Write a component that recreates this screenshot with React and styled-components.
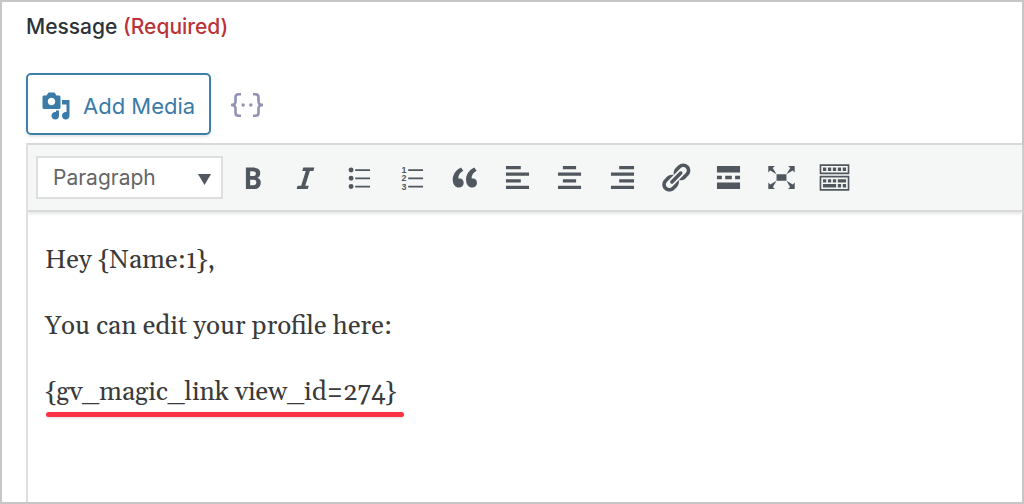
import { useState } from 'react'
import styled, { createGlobalStyle } from 'styled-components'

const GlobalStyle = createGlobalStyle`
    * {
        box-sizing: border-box;
    }
    body {
        margin: 0;
        background-color: #fff;
        font-family: Inter, "Liberation Sans", sans-serif;
    }
`
const StyledPage = styled.main`
    display: flex;
    flex-direction: column;
    min-height: 100vh;
    padding: 10px 0 0 24px;
    border: 2px solid #c6c6c6;
`
const StyledLabel = styled.label`
    font-size: 21px;
    line-height: 30px;
    font-weight: 500;
    color: #2c3338;
    margin-bottom: 31px;
`
const StyledRequired = styled.span`
    color: #b93338;
`
const StyledMediaBar = styled.div`
    display: flex;
    align-items: center;
    gap: 18px;
    margin-bottom: 8px;
`
const StyledMediaButton = styled.button`
    display: flex;
    align-items: center;
    gap: 12px;
    height: 62px;
    padding: 3px 14px 0 13px;
    font-family: inherit;
    font-size: 22px;
    color: #3a7ba8;
    background-color: #fff;
    border: 2px solid #3f80ab;
    border-radius: 5px;
    box-shadow: 0 2px 3px #e4e4e4;
    cursor: pointer;
`
const StyledTagButton = styled.button`
    display: flex;
    padding: 2px 0 0;
    color: #9292b6;
    background: none;
    border: none;
    cursor: pointer;
`
const StyledEditor = styled.div`
    display: flex;
    flex-direction: column;
    flex: 1;
    border-left: 2px solid #dedede;
`
const StyledToolbar = styled.div`
    display: flex;
    align-items: center;
    gap: 13px;
    padding: 11px 8px;
    background-color: #f5f7f7;
    border-top: 2px solid #d8d9d9;
    border-bottom: 2px solid #d8d9d9;
    box-shadow: 0 2px 3px #e6e6e6;
`
const StyledSelectWrapper = styled.div`
    position: relative;
    flex: none;
    width: 187px;
`
const StyledSelect = styled.select`
    display: block;
    appearance: none;
    width: 100%;
    height: 43px;
    padding: 0 15px;
    font-family: inherit;
    font-size: 21px;
    color: #646566;
    background-color: #fff;
    border: 2px solid #dddede;
    border-radius: 0;
`
const StyledArrow = styled.svg`
    position: absolute;
    top: 18px;
    right: 12px;
    pointer-events: none;
`
const StyledTools = styled.div`
    display: flex;
    justify-content: space-between;
    flex: 0 1 615px;
`
const StyledTool = styled.button`
    display: flex;
    padding: 0;
    color: #50575e;
    background: none;
    border: none;
    cursor: pointer;
    &:hover {
        color: #1d2327;
    }
`
const StyledContent = styled.div`
    position: relative;
    display: flex;
    flex: 1;
    margin-top: 2px;
`
const StyledTextarea = styled.textarea`
    flex: 1;
    min-height: 240px;
    padding: 30px 17px 0;
    font-family: Georgia, Gelasio, "Liberation Serif", serif;
    font-size: 26px;
    line-height: 33px;
    color: #3a3a3a;
    background: none;
    border: none;
    outline: none;
    resize: none;
`
const StyledUnderline = styled.span`
    position: absolute;
    top: 198px;
    left: 18px;
    width: 358px;
    height: 5px;
    border-radius: 3px;
    background-color: #fb3345;
    box-shadow: 0 1px 3px #ddd;
    pointer-events: none;
`

const tools = [
    { name: 'Bold', path: 'M6 4v13h4.54c1.37 0 2.46-.33 3.26-1 .8-.66 1.2-1.58 1.2-2.77 0-.84-.17-1.51-.51-2.01s-.9-.85-1.67-1.03v-.09c.57-.1 1.02-.4 1.36-.9s.51-1.13.51-1.91c0-1.14-.39-1.98-1.17-2.5C12.75 4.26 11.5 4 9.78 4H6zm2.57 5.15V6.26h1.36c.73 0 1.27.11 1.61.32.34.22.51.58.51 1.07 0 .54-.16.92-.47 1.15s-.82.35-1.51.35h-1.5zm0 2.19h1.6c1.44 0 2.16.53 2.16 1.61 0 .6-.17 1.05-.51 1.34s-.86.43-1.57.43H8.57v-3.38z' },
    { name: 'Italic', path: 'M14.78 6h-2.13l-2.8 9h2.12l-.62 2H4.6l.62-2h2.14l2.8-9H8.03l.62-2h6.75z' },
    { name: 'Bulleted list', path: 'M5.5 7a1.5 1.5 0 1 1 0-3 1.5 1.5 0 0 1 0 3zM8 5h9v1H8zM5.5 12a1.5 1.5 0 1 1 0-3 1.5 1.5 0 0 1 0 3zM8 10h9v1H8zM5.5 17a1.5 1.5 0 1 1 0-3 1.5 1.5 0 0 1 0 3zM8 15h9v1H8z' },
    { name: 'Numbered list', path: 'M8 5h9v1H8zM8 10h9v1H8zM8 15h9v1H8z', digits: true },
    { name: 'Blockquote', path: 'M9.49 13.22c0-.74-.2-1.38-.61-1.9-.62-.78-1.83-.88-2.53-.72-.29-1.65 1.11-3.75 2.92-4.65L7.88 4c-2.73 1.3-5.42 4.28-4.96 8.05C3.21 14.43 4.59 16 6.54 16c.85 0 1.56-.25 2.12-.75s.83-1.18.83-2.03zm8.05 0c0-.74-.2-1.38-.61-1.9-.63-.78-1.83-.88-2.53-.72-.29-1.65 1.11-3.75 2.92-4.65L15.93 4c-2.73 1.3-5.41 4.28-4.95 8.05.29 2.38 1.66 3.95 3.61 3.95.85 0 1.56-.25 2.12-.75s.83-1.18.83-2.03z' },
    { name: 'Align left', path: 'M12 5V3H3v2h9zm5 4V7H3v2h14zm-5 4v-2H3v2h9zm5 4v-2H3v2h14z' },
    { name: 'Align center', path: 'M14 5V3H6v2h8zm3 4V7H3v2h14zm-3 4v-2H6v2h8zm3 4v-2H3v2h14z' },
    { name: 'Align right', path: 'M17 5V3H8v2h9zm0 4V7H3v2h14zm0 4v-2H8v2h9zm0 4v-2H3v2h14z' },
    { name: 'Insert link', path: 'M17.74 2.76c1.68 1.69 1.68 4.41 0 6.1l-1.53 1.52c-1.12 1.12-2.7 1.47-4.14 1.09l2.62-2.61.76-.77.76-.76c.84-.84.84-2.2 0-3.04-.84-.85-2.2-.85-3.04 0l-.77.76-3.38 3.38c-.37-1.44-.02-3.02 1.1-4.14l1.52-1.53c1.69-1.68 4.42-1.68 6.1 0zM8.59 13.43l5.34-5.34c.42-.42.42-1.1 0-1.52-.44-.43-1.13-.39-1.53 0l-5.33 5.34c-.42.42-.42 1.1 0 1.52.44.43 1.13.39 1.52 0zm-.76 2.29l4.14-4.15c.38 1.44.03 3.02-1.09 4.14l-1.52 1.53c-1.69 1.68-4.41 1.68-6.1 0-1.68-1.68-1.68-4.42 0-6.1l1.53-1.52c1.12-1.12 2.7-1.47 4.14-1.1l-4.14 4.15c-.85.84-.85 2.2 0 3.05.84.84 2.2.84 3.04 0z' },
    { name: 'Read more', path: 'M17 7V3H3v4h14zM6 11V9H3v2h3zm6 0V9H8v2h4zm5 0V9h-3v2h3zm0 6v-4H3v4h14z' },
    { name: 'Fullscreen', path: 'M7 8h6v4H7zm-5 5v4h4l-1.2-1.2L7 12l-3.8 2.2M14 17h4v-4l-1.2 1.2L13 12l2.2 3.8M14 3l1.3 1.3L13 8l3.8-2.2L18 7V3M6 3H2v4l1.2-1.2L7 8 4.7 4.3' },
    { name: 'Toolbar toggle', path: 'M19 2v6H1V2h18zm-1 5V3H2v4h16zM5 4v2H3V4h2zm3 0v2H6V4h2zm3 0v2H9V4h2zm3 0v2h-2V4h2zm3 0v2h-2V4h2zm2 5v9H1V9h18zm-1 8v-7H2v7h16zM5 11v2H3v-2h2zm3 0v2H6v-2h2zm3 0v2H9v-2h2zm6 0v2h-5v-2h5zm-6 3v2H3v-2h8zm3 0v2h-2v-2h2zm3 0v2h-2v-2h2z' },
]

const MediaIcon = () => (
    <svg width="30" height="30" viewBox="0 0 20 20" fill="currentColor" aria-hidden="true">
        <path d="M13 11V4c0-.55-.45-1-1-1h-1.67L9 1H5L3.67 3H2c-.55 0-1 .45-1 1v7c0 .55.45 1 1 1h10c.55 0 1-.45 1-1zM7 4.5c1.38 0 2.5 1.12 2.5 2.5S8.38 9.5 7 9.5 4.5 8.38 4.5 7 5.62 4.5 7 4.5zM14 6h5v10.5c0 1.38-1.12 2.5-2.5 2.5S14 17.88 14 16.5s1.12-2.5 2.5-2.5c.17 0 .34.02.5.05V9h-3V6zm-4 8.05V13h2v3.5c0 1.38-1.12 2.5-2.5 2.5S7 17.88 7 16.5 8.12 14 9.5 14c.17 0 .34.02.5.05z" />
    </svg>
)

const MergeTagIcon = () => (
    <svg width="36" height="26" viewBox="0 0 36 26" fill="none" stroke="currentColor" strokeWidth="2.6" aria-hidden="true">
        <path d="M12 2.3H9.5Q6.5 2.3 6.5 5.3V9.5Q6.5 13 2 13Q6.5 13 6.5 16.5V20.7Q6.5 23.7 9.5 23.7H12" />
        <path d="M24 2.3H26.5Q29.5 2.3 29.5 5.3V9.5Q29.5 13 34 13Q29.5 13 29.5 16.5V20.7Q29.5 23.7 26.5 23.7H24" />
        <circle cx="14.2" cy="13" r="1.7" fill="currentColor" stroke="none" />
        <circle cx="21.8" cy="13" r="1.7" fill="currentColor" stroke="none" />
    </svg>
)

export default function App() {
    const [message, setMessage] = useState(
        'Hey {Name:1},\n\nYou can edit your profile here:\n\n{gv_magic_link view_id=274}'
    )

    const toolsHtml = tools.map(tool => (
        <StyledTool key={tool.name} type="button" aria-label={tool.name}>
            <svg width="33" height="33" viewBox="0 0 20 20" fill="currentColor" aria-hidden="true">
                <path fillRule={tool.name === 'Toolbar toggle' ? 'evenodd' : 'nonzero'} d={tool.path} />
                {
                    tool.digits && (
                        <g fontFamily="Liberation Sans, sans-serif" fontSize="5.4" fontWeight="700">
                            <text x="4" y="7.3">1</text>
                            <text x="4" y="12.3">2</text>
                            <text x="4" y="17.3">3</text>
                        </g>
                    )
                }
            </svg>
        </StyledTool>
    ))

    return (
        <>
            <GlobalStyle />
            <StyledPage>
                <StyledLabel htmlFor="message">
                    Message <StyledRequired>(Required)</StyledRequired>
                </StyledLabel>
                <StyledMediaBar>
                    <StyledMediaButton type="button">
                        <MediaIcon />
                        Add Media
                    </StyledMediaButton>
                    <StyledTagButton type="button" aria-label="Insert merge tag">
                        <MergeTagIcon />
                    </StyledTagButton>
                </StyledMediaBar>
                <StyledEditor>
                    <StyledToolbar role="toolbar" aria-label="Formatting">
                        <StyledSelectWrapper>
                            <StyledSelect aria-label="Text style" defaultValue="Paragraph">
                                <option>Paragraph</option>
                                <option>Heading 1</option>
                                <option>Heading 2</option>
                                <option>Preformatted</option>
                            </StyledSelect>
                            <StyledArrow width="13" height="11" viewBox="0 0 13 11" fill="#50575e" aria-hidden="true">
                                <path d="M0 0h13L6.5 11z" />
                            </StyledArrow>
                        </StyledSelectWrapper>
                        <StyledTools>{toolsHtml}</StyledTools>
                    </StyledToolbar>
                    <StyledContent>
                        <StyledTextarea
                            id="message"
                            spellCheck={false}
                            value={message}
                            onChange={e => setMessage(e.target.value)}
                        />
                        <StyledUnderline />
                    </StyledContent>
                </StyledEditor>
            </StyledPage>
        </>
    )
}
